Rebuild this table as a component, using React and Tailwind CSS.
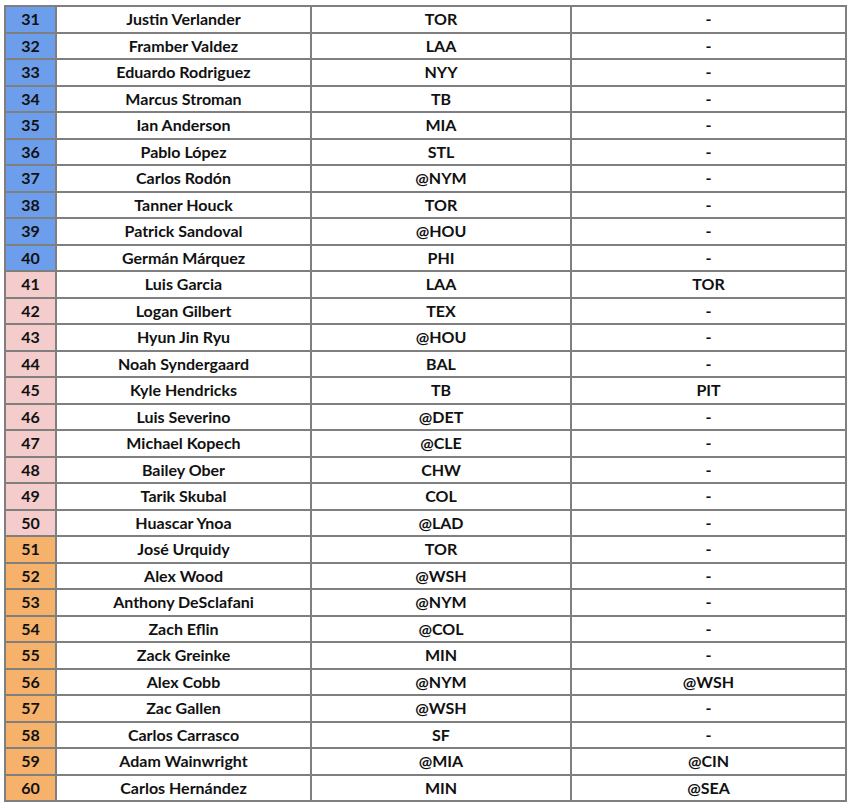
import React from "react";

const rows = [
  [31, "Justin Verlander", "TOR", "-"],
  [32, "Framber Valdez", "LAA", "-"],
  [33, "Eduardo Rodriguez", "NYY", "-"],
  [34, "Marcus Stroman", "TB", "-"],
  [35, "Ian Anderson", "MIA", "-"],
  [36, "Pablo López", "STL", "-"],
  [37, "Carlos Rodón", "@NYM", "-"],
  [38, "Tanner Houck", "TOR", "-"],
  [39, "Patrick Sandoval", "@HOU", "-"],
  [40, "Germán Márquez", "PHI", "-"],
  [41, "Luis Garcia", "LAA", "TOR"],
  [42, "Logan Gilbert", "TEX", "-"],
  [43, "Hyun Jin Ryu", "@HOU", "-"],
  [44, "Noah Syndergaard", "BAL", "-"],
  [45, "Kyle Hendricks", "TB", "PIT"],
  [46, "Luis Severino", "@DET", "-"],
  [47, "Michael Kopech", "@CLE", "-"],
  [48, "Bailey Ober", "CHW", "-"],
  [49, "Tarik Skubal", "COL", "-"],
  [50, "Huascar Ynoa", "@LAD", "-"],
  [51, "José Urquidy", "TOR", "-"],
  [52, "Alex Wood", "@WSH", "-"],
  [53, "Anthony DeSclafani", "@NYM", "-"],
  [54, "Zach Eflin", "@COL", "-"],
  [55, "Zack Greinke", "MIN", "-"],
  [56, "Alex Cobb", "@NYM", "@WSH"],
  [57, "Zac Gallen", "@WSH", "-"],
  [58, "Carlos Carrasco", "SF", "-"],
  [59, "Adam Wainwright", "@MIA", "@CIN"],
  [60, "Carlos Hernández", "MIN", "@SEA"],
];

const tierColor = (n) => {
  if (n <= 40) return "bg-[#6d9eeb]";
  if (n <= 50) return "bg-[#f4cccc]";
  return "bg-[#f6b26b]";
};

const App = () => {
  return (
    <div className="w-[849px] h-[809px] bg-white pl-[4px] pt-[5px] font-['Lato','Open_Sans',sans-serif] text-[16px] font-bold text-[#111]">
      <table className="w-[841px] table-fixed border-collapse">
        <colgroup>
          <col className="w-[51px]" />
          <col className="w-[255px]" />
          <col className="w-[260px]" />
          <col className="w-[275px]" />
        </colgroup>
        <tbody>
          {rows.map(([rank, name, opp1, opp2]) => (
            <tr key={rank} className="h-[26.5px]">
              <td className={`border-2 border-[#7f7f7f] text-center p-0 leading-none ${tierColor(rank)}`}>
                {rank}
              </td>
              <td className="border-2 border-[#7f7f7f] text-center p-0 leading-none">{name}</td>
              <td className="border-2 border-[#7f7f7f] text-center p-0 leading-none">{opp1}</td>
              <td className="border-2 border-[#7f7f7f] text-center p-0 leading-none">{opp2}</td>
            </tr>
          ))}
        </tbody>
      </table>
    </div>
  );
};

export default App;
